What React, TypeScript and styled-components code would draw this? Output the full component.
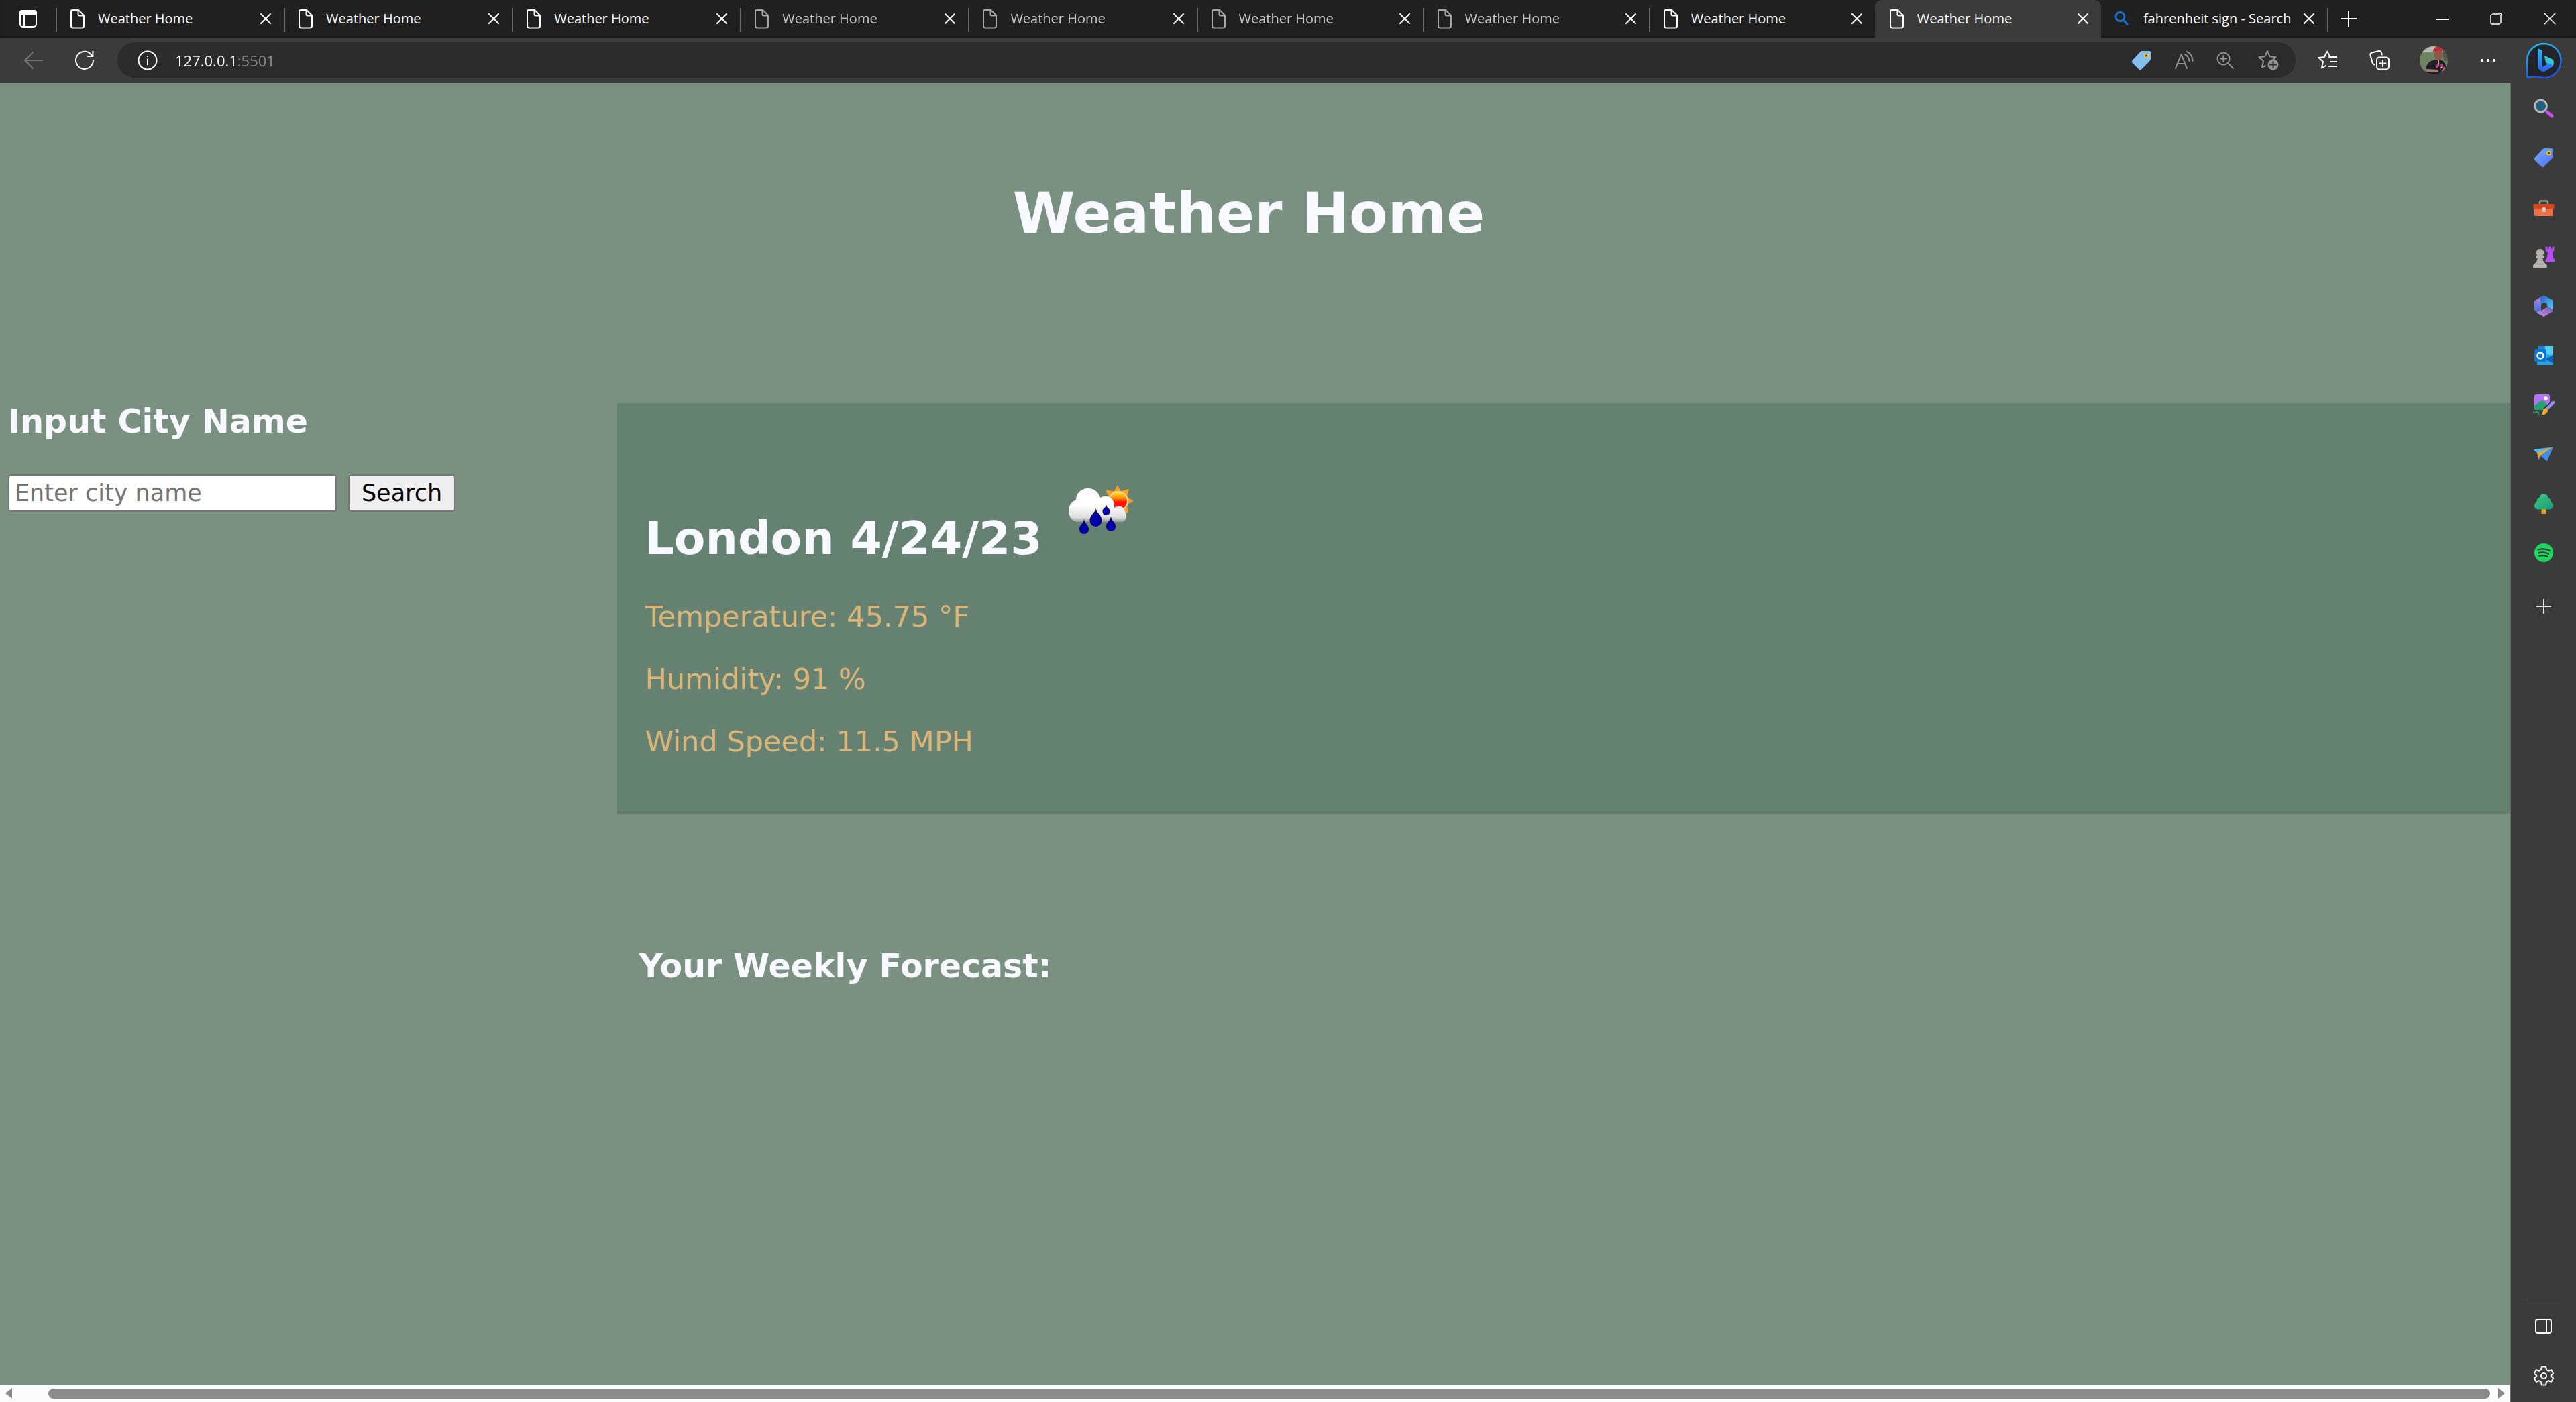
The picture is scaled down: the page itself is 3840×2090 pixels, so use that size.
import React from 'react';
import styled, { createGlobalStyle } from 'styled-components';

const GlobalStyle = createGlobalStyle`
  *, *::before, *::after { box-sizing: border-box; }
  html, body { margin: 0; height: 100%; }
  body { background: #3b3b3b; }
  h1, h2, p { margin: 0; }
  button { font: inherit; color: inherit; }
`;

const uiFont = `"Open Sans", "Noto Sans", sans-serif`;
const pageFont = `Verdana, "DejaVu Sans", sans-serif`;

const Browser = styled.div`
  display: flex;
  flex-direction: column;
  min-height: 100vh;
  background: #3b3b3b;
  color: #fff;
  font-family: ${uiFont};
`;

/* ---------- tab strip ---------- */

const TabStrip = styled.header`
  display: flex;
  align-items: stretch;
  height: 56px;
  background: #202020;
  box-shadow: inset 0 -2px 2px #181818;
`;

const IconButton = styled.button<{ $w?: number }>`
  display: flex;
  align-items: center;
  justify-content: center;
  flex: none;
  width: ${(p) => p.$w ?? 32}px;
  padding: 0;
  border: 0;
  background: none;
`;

const TabList = styled.div`
  display: grid;
  grid-template-columns: repeat(5, 340fr) repeat(5, 337fr);
  flex: 1;
  min-width: 0;
`;

const Tab = styled.div<{ $active?: boolean; $asleep?: boolean; $bare?: boolean }>`
  display: flex;
  align-items: center;
  min-width: 0;
  padding: 0 19px;
  border-radius: ${(p) => (p.$active ? '10px 10px 0 0' : '0')};
  background: ${(p) =>
    p.$active
      ? '#3b3b3b'
      : p.$bare
        ? 'none'
        : 'linear-gradient(#686868, #686868) 0 12px / 2px 35px no-repeat'};
  color: #fff;
  & > svg { flex: none; opacity: ${(p) => (p.$asleep ? 0.6 : 1)}; }
  & > span { opacity: ${(p) => (p.$asleep ? 0.75 : 1)}; }
`;

const TabTitle = styled.span`
  flex: 1;
  min-width: 0;
  margin-left: 18px;
  overflow: hidden;
  white-space: nowrap;
  font-size: 20px;
  line-height: 32px;
`;

const StripEnd = styled.div`
  display: flex;
  width: 371px;
  padding-left: 11px;
  background: linear-gradient(#686868, #686868) 0 12px / 2px 35px no-repeat;
`;

const WindowControls = styled.div`
  display: flex;
  margin-left: auto;
`;

/* ---------- toolbar ---------- */

const Toolbar = styled.nav`
  display: flex;
  align-items: center;
  height: 67px;
  padding: 0 14px 0 21px;
`;

const AddressBar = styled.div`
  display: flex;
  align-items: center;
  flex: 1;
  height: 53px;
  margin: 0 20px 0 2px;
  padding: 0 7px 0 30px;
  border-radius: 27px;
  background: #2b2b2b;
`;

const AddressInput = styled.input`
  flex: 1;
  min-width: 0;
  height: 40px;
  margin-left: 26px;
  padding: 0;
  border: 0;
  outline: 0;
  background: linear-gradient(90deg, #fff 92px, #8a8a8a 92px);
  background-clip: text;
  -webkit-background-clip: text;
  -webkit-text-fill-color: transparent;
  font-family: ${uiFont};
  font-size: 22px;
`;

/* ---------- page and sidebar ---------- */

const Workspace = styled.div`
  display: flex;
  flex: 1;
`;

const Viewport = styled.div`
  display: flex;
  flex-direction: column;
  flex: 1;
  min-width: 0;
  border-top: 1px solid #6a6e6b;
  border-right: 1px solid #6a6e6b;
`;

const Page = styled.div`
  flex: 1;
  background: #7a9080;
  color: #f8f8ff;
  font-family: ${pageFont};
`;

const PageHeader = styled.header`
  padding: 144px 19px 233px 0;
  text-align: center;
`;

const PageTitle = styled.h1`
  font-size: 84px;
  line-height: 100px;
`;

const Columns = styled.div`
  display: grid;
  grid-template-columns: 46fr 141fr;
`;

const SearchPanel = styled.form`
  padding: 0 0 0 12px;
`;

const Heading = styled.h2`
  font-size: 49px;
  line-height: 56px;
`;

const SearchRow = styled.div`
  display: flex;
  gap: 17px;
  margin-top: 50px;
`;

const CityInput = styled.input`
  width: 490px;
  height: 56px;
  padding: 0 8px;
  border: 2px solid #767676;
  border-radius: 5px;
  background: #fff;
  color: #000;
  font-family: ${pageFont};
  font-size: 35px;
  &::placeholder { color: #757575; opacity: 1; }
`;

const SearchButton = styled.button`
  width: 160px;
  height: 56px;
  padding: 0;
  border: 2px solid #767676;
  border-radius: 5px;
  background: #efefef;
  color: #000;
  font-family: ${pageFont};
  font-size: 35px;
`;

const Current = styled.section`
  padding: 122px 41px 83px;
  background: #658171;
`;

const CityRow = styled.div`
  display: flex;
  align-items: flex-start;
  gap: 38px;
  margin-bottom: 51px;
`;

const City = styled.h2`
  margin-top: 40px;
  font-size: 68px;
  line-height: 80px;
`;

const Readings = styled.div`
  display: grid;
  gap: 43px;
  color: #dbb577;
  font-size: 43px;
  line-height: 50px;
`;

const Forecast = styled.section`
  padding: 200px 32px 0;
`;

const ScrollTrack = styled.div`
  display: flex;
  align-items: center;
  justify-content: space-between;
  gap: 12px;
  height: 26px;
  padding: 0 8px;
  background: #fcfcfc;
`;

const ScrollThumb = styled.div`
  flex: 1;
  height: 15px;
  margin-left: 42px;
  border-radius: 8px;
  background: #8b8b8b;
`;

const Sidebar = styled.aside`
  display: flex;
  flex-direction: column;
  align-items: center;
  width: 97px;
  padding-bottom: 23px;
`;

const AppList = styled.div`
  display: grid;
  grid-auto-rows: 1fr;
  height: 738px;
  padding-top: 2px;
`;

const SidebarRule = styled.hr`
  width: 49px;
  height: 1px;
  margin: auto 0 24px;
  border: 0;
  background: #6a6a6a;
`;

const SidebarTool = styled(IconButton)`
  height: 32px;
  margin-top: ${(p) => (p.$w ? 27 : 42)}px;
`;

/* ---------- icons ---------- */

type IconProps = { w?: number; h?: number; box?: string; sw?: number; color?: string; children: React.ReactNode };

const Line = ({ w = 30, h = w, box, sw = 2, color = '#fff', children }: IconProps) => (
  <svg width={w} height={h} viewBox={box ?? `0 0 ${w} ${h}`} fill="none" stroke={color} strokeWidth={sw} strokeLinecap="round" strokeLinejoin="round" aria-hidden="true">
    {children}
  </svg>
);

const FileIcon = () => (
  <Line w={26} h={30}>
    <path d="M6 2h9l8 8v15.500a3 3 0 0 1-3 3H7a3 3 0 0 1-3-3V4a2 2 0 0 1 2-2zM14.500 2v6.500a2 2 0 0 0 2 2H23" />
  </Line>
);

const CloseIcon = ({ size = 16, sw = 2 }: { size?: number; sw?: number }) => (
  <Line w={size} sw={sw}>
    <path d={`M1 1L${size - 1} ${size - 1}M${size - 1} 1L1 ${size - 1}`} />
  </Line>
);

const MagnifierIcon = () => (
  <Line w={26} h={30} sw={3} color="#1373d1">
    <circle cx="9.500" cy="12" r="6.500" />
    <path d="M14.500 17l5.500 6.500" />
  </Line>
);

const STAR = 'M14 2l3.700 8.200 8.800 1-6.600 6';

const WeatherIcon = () => {
  const drop = (x: number, top: number, bottom: number, r: number) =>
    `M${x} ${top}C${x + 1} ${top + 7} ${x + r} ${bottom - r * 2} ${x + r} ${bottom - r}A${r} ${r} 0 0 1 ${x - r} ${bottom - r}C${x - r} ${bottom - r * 2} ${x - 1} ${top + 7} ${x} ${top}z`;
  return (
    <svg width="98" height="74" viewBox="0 0 98 74" role="img" aria-label="Rain with sun">
      <defs>
        <linearGradient id="sun" x1="0" y1="0" x2="0" y2="1">
          <stop offset="0.050" stopColor="#ffe01a" />
          <stop offset="0.350" stopColor="#ff8a10" />
          <stop offset="0.550" stopColor="#ff1500" />
        </linearGradient>
        <linearGradient id="cloud" gradientUnits="userSpaceOnUse" x1="0" y1="4" x2="0" y2="56">
          <stop offset="0.500" stopColor="#fff" />
          <stop offset="0.850" stopColor="#dedede" />
          <stop offset="1" stopColor="#8d8d8d" />
        </linearGradient>
        <radialGradient id="drop" cx="0.500" cy="0.700" r="0.600">
          <stop offset="0" stopColor="#0000d8" />
          <stop offset="1" stopColor="#00005c" />
        </radialGradient>
      </defs>
      <path fill="#f7a01e" d="M74 0l4 9 13-3-3 12 10 6-10 5 2 13-12-3-22-30 13 0z" />
      <path fill="#f7a01e" d="M57 7l12 3-8 8z" />
      <circle cx="75" cy="24" r="14" fill="url(#sun)" stroke="#fbd9a0" strokeWidth="2" />
      <path
        fill="url(#cloud)"
        d="M13 55C5 53 1 46 1 39c0-8 4-14 11-17C12 12 20 5 30 5c9 0 16 6 18 14 3-2 6-2 9-2 7 0 12 6 12 14v3c3-2 6-2 9-2 4 1 7 4 7 8 3 3 3 10-1 13-1 2-3 2-5 2z"
      />
      <path fill="url(#drop)" d={drop(41.500, 35, 62, 9)} />
      <path fill="url(#drop)" d={drop(57, 29, 45, 5.500)} />
      <path fill="url(#drop)" d={drop(24, 51, 73, 7)} />
      <path fill="url(#drop)" d={drop(64, 47, 69, 7)} />
    </svg>
  );
};

const Art = ({ children }: { children: React.ReactNode }) => (
  <svg width="32" height="32" viewBox="0 0 32 32" aria-hidden="true">{children}</svg>
);

const TagArt = ({ fill, hole }: { fill: string; hole: string }) => (
  <Art>
    <path fill={fill} d="M17 2h10.500A2.500 2.500 0 0 1 30 4.500V14a4 4 0 0 1-1.200 2.800L16.500 29.300a3 3 0 0 1-4.200 0l-9.400-9.400a3 3 0 0 1 0-4.200L14.500 3.200A4 4 0 0 1 17 2z" />
    <circle cx="23.500" cy="9" r="2.600" fill={hole} stroke="#f2bd12" strokeWidth="2" />
  </Art>
);

const sidebarApps: { label: string; art: React.ReactNode }[] = [
  {
    label: 'Search',
    art: (
      <Art>
        <path d="M21 21l7 6" stroke="#c74bf5" strokeWidth="5" strokeLinecap="round" />
        <circle cx="11.500" cy="12" r="9" fill="#22607f" stroke="#b9b6b3" strokeWidth="3" />
      </Art>
    ),
  },
  { label: 'Shopping', art: <TagArt fill="url(#tagBlue)" hole="#3a3f66" /> },
  {
    label: 'Tools',
    art: (
      <Art>
        <path d="M10 12V8.500a2 2 0 0 1 2-2h8a2 2 0 0 1 2 2V12" fill="none" stroke="#9b9b9b" strokeWidth="2.500" />
        <rect x="2" y="13" width="28" height="16" rx="2" fill="#ee6f48" />
        <rect x="0.500" y="11" width="31" height="7.500" rx="1.500" fill="#d2481a" />
        <rect x="13.500" y="16" width="5.500" height="7" rx="1.500" fill="#c9c9c9" />
      </Art>
    ),
  },
  {
    label: 'Games',
    art: (
      <Art>
        <path fill="#b44cf7" d="M18.500 0.500h3v3h2v-3h3v3h2v-3h3V6l-2.500 3 1 8 2.500 3.500v3h-14v-3L21 17l1-8-3.500-3z" />
        <path fill="#b3b1b0" d="M10.500 4a5.500 5.500 0 0 1 4 9.500c3 0 3.500 4.500 0 4.500 0 4 2 6 4 8 2 1 2.500 2 2.500 4.500 0 1-.5 1.500-1.500 1.500h-18C.5 32 0 31.500 0 30.500 0 28 .5 27 2.500 26c2-2 4-4 4-8-3.500 0-3-4.500 0-4.500a5.500 5.500 0 0 1 4-9.500z" />
      </Art>
    ),
  },
  {
    label: 'Microsoft 365',
    art: (
      <Art>
        <g strokeWidth="2" strokeLinejoin="round">
          <path fill="url(#officeLeft)" stroke="url(#officeLeft)" d="M12 3.500L3 9v13l4 3.500 4-3V11z" />
          <path fill="url(#officeBottom)" stroke="url(#officeBottom)" d="M7 26l9 5 13-7.500V20l-8-1.500-5 3.500z" />
          <path fill="url(#officeTop)" stroke="url(#officeTop)" d="M12 3.500L16 1.500l13 7V20l-7-4.500v-3l-5-3-4.500 2.500z" />
        </g>
      </Art>
    ),
  },
  {
    label: 'Outlook',
    art: (
      <Art>
        <rect x="8" y="2" width="21" height="15" fill="#50d2f7" />
        <rect x="8" y="2" width="10" height="15" fill="#1d86d8" />
        <path fill="#2aa0e4" d="M6 14l24 1v13.500a1.500 1.500 0 0 1-1.500 1.500h-21A1.500 1.500 0 0 1 6 28.500z" />
        <path fill="#0f5fae" d="M30 15v13L19 21z" />
        <rect x="2" y="7" width="18" height="18" rx="2" fill="#0a74d1" />
        <circle cx="11" cy="16" r="4.500" fill="none" stroke="#fff" strokeWidth="2.500" />
      </Art>
    ),
  },
  {
    label: 'Image Creator',
    art: (
      <Art>
        <rect x="2" y="1" width="23" height="23" rx="3" fill="#b573f5" />
        <path fill="#21a36d" d="M2 18l9-7c1.500-1 3-1 4.500 0l9.500 8v2a3 3 0 0 1-3 3H5a3 3 0 0 1-3-3z" />
        <circle cx="19" cy="7" r="2.800" fill="#fff" />
        <path d="M18 24L31 13" stroke="#3b3b3b" strokeWidth="8" />
        <path d="M20 23l10-10" stroke="#9a90f5" strokeWidth="4.500" strokeLinecap="round" />
        <path fill="#f0ac1d" d="M17 22c3-1 6 2 4.500 5-2 4-6 4.500-9 3.500 3-2 1-6 4.500-8.500z" />
        <path d="M1 27c2 3 3 0 5 0s3 1 2 3" fill="none" stroke="#21a36d" strokeWidth="2" strokeLinecap="round" />
      </Art>
    ),
  },
  {
    label: 'Drop',
    art: (
      <Art>
        <path fill="#56b8f5" d="M0.500 9L30 5.500 7 15z" />
        <path fill="#f5a81c" d="M30 5.500L6 14.500 9 24.500l2-6z" />
        <path fill="#2a62c9" d="M10 19l3 .5-4 5z" />
        <path fill="#3c8ef0" d="M30 5.500L11 18.500 21 26.500z" />
      </Art>
    ),
  },
  {
    label: 'E-tree',
    art: (
      <Art>
        <rect x="12.500" y="23" width="7" height="8" rx="1.500" fill="#eda01c" />
        <path fill="url(#treeGreen)" d="M16 1c4 0 6 2.500 6 5.500 3 1 4.500 3.500 4.500 6.500 2 1.500 3.500 3.500 3.500 6 0 3-2.500 5.500-6 5.500H8c-3.500 0-6-2.500-6-5.500 0-2.500 1.500-4.500 3.500-6 0-3 1.500-5.500 4.500-6.500C10 3.500 12 1 16 1z" />
      </Art>
    ),
  },
  {
    label: 'Spotify',
    art: (
      <Art>
        <circle cx="16" cy="16" r="14" fill="#1ed760" />
        <path d="M7.500 11.500c6-1.800 12.500-1.200 17.500 1.500M8.500 16.300c5-1.400 10.500-.9 14.500 1.500M9.500 20.800c4-1.100 8.500-.7 12 1.200" fill="none" stroke="#2f3b33" strokeWidth="2.300" strokeLinecap="round" />
      </Art>
    ),
  },
];

const PaintSheet = styled.svg`
  display: block;
`;

const SharedPaints = () => (
  <PaintSheet width="0" height="0" aria-hidden="true">
    <defs>
      <linearGradient id="tagBlue" x1="0" y1="0" x2="1" y2="1">
        <stop offset="0" stopColor="#75adf9" />
        <stop offset="1" stopColor="#4f6df0" />
      </linearGradient>
      <linearGradient id="treeGreen" x1="0" y1="0" x2="1" y2="1">
        <stop offset="0" stopColor="#3ccb83" />
        <stop offset="1" stopColor="#1d9a78" />
      </linearGradient>
      <linearGradient id="officeLeft" x1="0" y1="0" x2="0" y2="1">
        <stop offset="0" stopColor="#a983e6" />
        <stop offset="1" stopColor="#3f74d6" />
      </linearGradient>
      <linearGradient id="officeTop" x1="0" y1="0" x2="1" y2="1">
        <stop offset="0" stopColor="#3063c8" />
        <stop offset="1" stopColor="#4fd0f7" />
      </linearGradient>
      <linearGradient id="officeBottom" x1="0" y1="1" x2="1" y2="0">
        <stop offset="0" stopColor="#c292ea" />
        <stop offset="1" stopColor="#7a55b0" />
      </linearGradient>
      <linearGradient id="bingRing" x1="0" y1="0" x2="0.300" y2="1">
        <stop offset="0" stopColor="#27c3f3" />
        <stop offset="1" stopColor="#1a55e3" />
      </linearGradient>
      <linearGradient id="bingStem" x1="0" y1="0" x2="0" y2="1">
        <stop offset="0" stopColor="#38b6f5" />
        <stop offset="1" stopColor="#2b62e8" />
      </linearGradient>
      <linearGradient id="bingBowl" x1="1" y1="0" x2="0" y2="1">
        <stop offset="0" stopColor="#37e0d0" />
        <stop offset="1" stopColor="#2f8df2" />
      </linearGradient>
    </defs>
  </PaintSheet>
);

const BingIcon = () => (
  <svg width="56" height="56" viewBox="0 0 56 56" aria-hidden="true">
    <path d="M28 3a25.500 25.500 0 1 1 0 51c-4 0-8-1.500-11-1.500-4 0-8 1.500-14 .5V28A25.500 25.500 0 0 1 28 3z" fill="#222427" stroke="url(#bingRing)" strokeWidth="2.500" />
    <path fill="url(#bingBowl)" d="M29 21l10 4.500c4 2 5.500 7 2 11.500L29 44.500l-8-2 13-9-3-2z" />
    <path fill="url(#bingStem)" d="M19 10l5 2.500c1.500.8 2 1.500 2 3V38l8-4.500c3-1 6 0 7 2-1 2-3 4-5 5l-6 3.700c-2 1-4 1-5.500 0L20.500 41c-1-.7-1.500-1.500-1.500-3z" />
  </svg>
);

const AvatarIcon = () => (
  <svg width="42" height="42" viewBox="0 0 42 42" aria-hidden="true">
    <defs>
      <clipPath id="avatarClip"><circle cx="21" cy="21" r="21" /></clipPath>
    </defs>
    <g clipPath="url(#avatarClip)">
      <rect width="42" height="42" fill="#6e8561" />
      <path fill="#b9bdb8" d="M0 0h42v9H0z" />
      <path fill="#4d5a48" d="M34 6h8v16h-6z" />
      <path fill="#1e1f2a" d="M11 42c-3-8-1-17 6-20l6-2 10 1c6 3 8 13 7 21z" />
      <ellipse cx="28" cy="13" rx="6.500" ry="8.500" fill="#8c5746" />
      <path fill="#cf2433" d="M20 9c0-6 4-9 8-9s7 3 7.500 8c-5-2-10-2-15.500 1z" />
      <path d="M28 21v9M25 32l4-6M32 33l2-6" stroke="#e0a9b8" strokeWidth="2" />
      <path d="M25 31l3-4M32 27l3 5" stroke="#c23a75" strokeWidth="3" />
      <path d="M10 36l18 1M34 38l4-6" stroke="#ab7564" strokeWidth="4" />
    </g>
  </svg>
);

const tabs = [
  { title: 'Weather Home' },
  { title: 'Weather Home' },
  { title: 'Weather Home' },
  { title: 'Weather Home', asleep: true },
  { title: 'Weather Home', asleep: true },
  { title: 'Weather Home', asleep: true },
  { title: 'Weather Home', asleep: true },
  { title: 'Weather Home' },
  { title: 'Weather Home', active: true },
  { title: 'fahrenheit sign - Search', bare: true },
];

const readings = ['Temperature: 45.75 °F', 'Humidity: 91 %', 'Wind Speed: 11.5 MPH'];

export default function App() {
  const gray = '#939393';
  return (
    <Browser>
      <GlobalStyle />
      <SharedPaints />
      <TabStrip>
        <IconButton $w={83} aria-label="Tab actions">
          <Line w={26} h={30}>
            <rect x="1" y="3" width="24" height="24" rx="4" />
            <path d="M1 9V6a3 3 0 0 1 3-3h18a3 3 0 0 1 3 3v3z" fill="#fff" />
            <path d="M7 9v18" />
          </Line>
        </IconButton>
        <TabList role="tablist">
          {tabs.map((t, i) => (
            <Tab key={i} role="tab" aria-selected={!!t.active} $active={t.active} $asleep={t.asleep} $bare={t.bare}>
              {t.bare ? <MagnifierIcon /> : <FileIcon />}
              <TabTitle>{t.title}</TabTitle>
              <IconButton $w={16} aria-label="Close tab"><CloseIcon /></IconButton>
            </Tab>
          ))}
        </TabList>
        <StripEnd>
          <IconButton $w={42} aria-label="New tab">
            <Line w={24}><path d="M12 0v24M0 12h24" /></Line>
          </IconButton>
          <WindowControls>
            <IconButton $w={80} aria-label="Minimize">
              <Line w={18} sw={2}><path d="M0 10h18" /></Line>
            </IconButton>
            <IconButton $w={80} aria-label="Restore">
              <Line w={18} sw={1.500}>
                <rect x="1" y="3" width="14" height="14" rx="2" />
                <path d="M4 1h10a3 3 0 0 1 3 3v11" />
              </Line>
            </IconButton>
            <IconButton $w={79} aria-label="Close window"><CloseIcon size={18} sw={1.500} /></IconButton>
          </WindowControls>
        </StripEnd>
      </TabStrip>

      <Toolbar aria-label="Toolbar">
        <IconButton $w={58} aria-label="Back">
          <Line w={28} h={26} color="#777"><path d="M27 13H1M13 1L1 13l12 12" /></Line>
        </IconButton>
        <IconButton $w={94} aria-label="Refresh">
          <Line w={30} sw={2}>
            <path d="M28 15a13 13 0 1 1-4-9.500l3 3.500M27.500 1.500V9H20" />
          </Line>
        </IconButton>
        <AddressBar>
          <Line w={30}>
            <circle cx="15" cy="15" r="13.500" />
            <path d="M15 13.500v8M15 9v.2" />
          </Line>
          <AddressInput aria-label="Address" defaultValue="127.0.0.1:5501" spellCheck={false} />
          <IconButton $w={70} aria-label="Shopping"><TagArt fill="#86bfee" hole="#3a3a3a" /></IconButton>
          <IconButton $w={58} aria-label="Read aloud">
            <Line w={28} color={gray}>
              <path d="M1 26L9.500 5 18 26M4 19h11M18 1c5 2 8 7 8.500 14M15 5c4 2 6 5 6.500 10" />
            </Line>
          </IconButton>
          <IconButton $w={64} aria-label="Zoom">
            <Line w={26} color={gray}>
              <circle cx="10.500" cy="10.500" r="9" />
              <path d="M17.500 17.500L25 25M10.500 6v9M6 10.500h9" />
            </Line>
          </IconButton>
          <IconButton $w={66} aria-label="Add to favorites">
            <Line w={32} color={gray}>
              <path d={`${STAR} -1 1M14 2l-3.700 8.200-8.800 1 6.600 6L6 26.500l5-2.500`} />
              <circle cx="22.500" cy="22.500" r="8" fill={gray} stroke="none" />
              <path d="M22.500 18v9M18 22.500h9" stroke="#2b2b2b" />
            </Line>
          </IconButton>
        </AddressBar>
        <IconButton $w={56} aria-label="Favorites">
          <Line w={30} sw={2}>
            <path d="M18.500 9.500L14 1.500l-4 8.500-8.500 1 6.500 6-2 9.500 6-3.500M17 10h11M19 17h9M17 24h11" />
          </Line>
        </IconButton>
        <IconButton $w={98} aria-label="Collections">
          <Line w={30}>
            <rect x="11" y="10.500" width="18" height="18" rx="4" />
            <path d="M20 15v9M15.500 19.500h9M7.500 21.500L5 20 1.500 7.500a3.500 3.500 0 0 1 2.500-4L14 1a3.500 3.500 0 0 1 4 2.500l.8 3" />
          </Line>
        </IconButton>
        <IconButton $w={64} aria-label="Profile"><AvatarIcon /></IconButton>
        <IconButton $w={98} aria-label="More">
          <svg width="24" height="6" viewBox="0 0 24 6" fill="#fff" aria-hidden="true">
            <circle cx="3" cy="3" r="2.300" />
            <circle cx="12" cy="3" r="2.300" />
            <circle cx="21" cy="3" r="2.300" />
          </svg>
        </IconButton>
        <IconButton $w={68} aria-label="Discover"><BingIcon /></IconButton>
      </Toolbar>

      <Workspace>
        <Viewport>
          <Page>
            <PageHeader><PageTitle>Weather Home</PageTitle></PageHeader>
            <Columns>
              <SearchPanel onSubmit={(e) => e.preventDefault()}>
                <Heading><label htmlFor="city">Input City Name</label></Heading>
                <SearchRow>
                  <CityInput id="city" placeholder="Enter city name" />
                  <SearchButton type="submit">Search</SearchButton>
                </SearchRow>
              </SearchPanel>
              <main>
                <Current>
                  <CityRow>
                    <City>London 4/24/23</City>
                    <WeatherIcon />
                  </CityRow>
                  <Readings>
                    {readings.map((r) => <p key={r}>{r}</p>)}
                  </Readings>
                </Current>
                <Forecast><Heading>Your Weekly Forecast:</Heading></Forecast>
              </main>
            </Columns>
          </Page>
          <ScrollTrack>
            <svg width="10" height="16" viewBox="0 0 10 16" aria-hidden="true"><path d="M10 0v16L0 8z" fill="#8b8b8b" /></svg>
            <ScrollThumb />
            <svg width="10" height="16" viewBox="0 0 10 16" aria-hidden="true"><path d="M0 0v16l10-8z" fill="#8b8b8b" /></svg>
          </ScrollTrack>
        </Viewport>
        <Sidebar>
          <AppList>
            {sidebarApps.map((a) => <IconButton key={a.label} aria-label={a.label}>{a.art}</IconButton>)}
          </AppList>
          <SidebarTool $w={32} aria-label="Customize sidebar">
            <Line w={22} color="#e4e4e4"><path d="M11 0v22M0 11h22" /></Line>
          </SidebarTool>
          <SidebarRule />
          <IconButton aria-label="Hide sidebar">
            <Line w={26} h={32}>
              <rect x="1" y="6" width="23" height="20" rx="3" />
              <path d="M17 6v20" />
            </Line>
          </IconButton>
          <SidebarTool aria-label="Settings">
            <Line w={30}>
              <circle cx="15" cy="15" r="4" />
              <path d="M12 1.500h6l1 4.500 3 1.800 4.200-1.500 3 5.200-3.400 3 0 1 3.400 3-3 5.200-4.200-1.500-3 1.800-1 4.500h-6l-1-4.500-3-1.800-4.200 1.500-3-5.200 3.400-3v-1l-3.400-3 3-5.200L8 7.800 11 6z" />
            </Line>
          </SidebarTool>
        </Sidebar>
      </Workspace>
    </Browser>
  );
}
